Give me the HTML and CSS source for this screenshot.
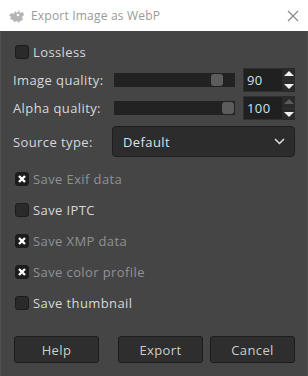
FILE: index.html
```html
<!DOCTYPE html>
<html lang="en">
<head>
  <meta charset="UTF-8">
  <title>Export Image as WebP</title>
  <link rel="stylesheet" href="styles.css">
</head>
<body>
  <div class="window">
    <div class="titlebar">
      <svg class="app-icon" width="17" height="14" viewBox="0 0 17 14">
        <path d="M1 6 L4 4 L6 5 L7 2 L9 4 L11 1 L12 4 L15 3 L16 6 L14 8 L15 11 L12 12 L11 14 L9 12 L6 13 L5 11 L2 10 L3 8 Z" fill="#b4b4b4"/>
        <circle cx="10" cy="6" r="1.3" fill="#ffffff"/>
      </svg>
      <span class="title">Export Image as WebP</span>
      <svg class="close" width="12" height="12" viewBox="0 0 12 12">
        <path d="M1 1 L11 11 M11 1 L1 11" stroke="#8a8a8a" stroke-width="1.2"/>
      </svg>
    </div>

    <div class="content">
      <label class="check-row first">
        <span class="check"></span> Lossless
      </label>

      <div class="scale-row first">
        <span class="field-label">Image quality:</span>
        <div class="track"><span class="handle" style="left: 97px"></span></div>
        <div class="spin">
          <span class="spin-value">90</span>
          <div class="spin-buttons">
            <span class="arrow up"></span>
            <span class="arrow down"></span>
          </div>
        </div>
      </div>

      <div class="scale-row">
        <span class="field-label">Alpha quality:</span>
        <div class="track"><span class="handle" style="left: 108px"></span></div>
        <div class="spin">
          <span class="spin-value">100</span>
          <div class="spin-buttons">
            <span class="arrow up disabled"></span>
            <span class="arrow down"></span>
          </div>
        </div>
      </div>

      <div class="combo-row">
        <span class="field-label">Source type:</span>
        <div class="combo">
          <span>Default</span>
          <svg width="11" height="7" viewBox="0 0 11 7">
            <path d="M1 1 L5.5 5.5 L10 1" fill="none" stroke="#e0e0e0" stroke-width="1.5"/>
          </svg>
        </div>
      </div>

      <div class="checks">
        <label class="check-row dim">
          <span class="check on"><svg width="10" height="10" viewBox="0 0 10 10"><path d="M2 2 L8 8 M8 2 L2 8" stroke="#ffffff" stroke-width="2.4"/></svg></span> Save Exif data
        </label>
        <label class="check-row"><span class="check"></span> Save IPTC</label>
        <label class="check-row dim">
          <span class="check on"><svg width="10" height="10" viewBox="0 0 10 10"><path d="M2 2 L8 8 M8 2 L2 8" stroke="#ffffff" stroke-width="2.4"/></svg></span> Save XMP data
        </label>
        <label class="check-row dim">
          <span class="check on"><svg width="10" height="10" viewBox="0 0 10 10"><path d="M2 2 L8 8 M8 2 L2 8" stroke="#ffffff" stroke-width="2.4"/></svg></span> Save color profile
        </label>
        <label class="check-row"><span class="check"></span> Save thumbnail</label>
      </div>

      <div class="buttons">
        <button class="btn">Help</button>
        <div class="right-buttons">
          <button class="btn">Export</button>
          <button class="btn">Cancel</button>
        </div>
      </div>
    </div>
  </div>
</body>
</html>
```

FILE: styles.css
```css
body {
  margin: 0;
  padding: 0;
  font-family: "Open Sans", "Noto Sans", sans-serif;
  background: #454545;
}

.window {
  width: 308px;
  height: 376px;
  background: #454545;
  box-sizing: border-box;
  border-left: 1px solid #505050;
  border-right: 1px solid #505050;
}

.titlebar {
  height: 31px;
  background: #ffffff;
  display: flex;
  align-items: center;
  padding-left: 8px;
  margin: 0 -1px;
}

.app-icon {
  margin-right: 6px;
}

.title {
  font-size: 12px;
  color: #999999;
  flex: 1;
  letter-spacing: 0.2px;
}

.close {
  margin-right: 9px;
}

.content {
  padding: 0 12px;
  color: #d4d8dc;
  font-size: 13px;
  letter-spacing: 0.4px;
}

.check-row {
  display: flex;
  align-items: center;
  gap: 4px;
  height: 31px;
  padding-left: 2px;
}

.check-row.first {
  height: 14px;
  margin-top: 14px;
}

.check-row.dim {
  color: #8e9296;
}

.check {
  width: 12px;
  height: 12px;
  border: 1px solid #1c1c1c;
  border-radius: 3px;
  background: #2a2a2a;
  display: inline-flex;
  align-items: center;
  justify-content: center;
  flex: none;
}

.check.on {
  background: #1c1c1c;
}

.scale-row,
.combo-row {
  display: flex;
  align-items: center;
}

.scale-row {
  height: 24px;
  margin-top: 4px;
}

.scale-row.first {
  margin-top: 9px;
}

.field-label {
  width: 101px;
  flex: none;
}

.track {
  position: relative;
  width: 121px;
  height: 14px;
  background: #222222;
  margin-right: 8px;
}

.handle {
  position: absolute;
  top: 1px;
  width: 12px;
  height: 12px;
  border-radius: 3px;
  background: #5c5c5c;
}

.spin {
  display: flex;
  height: 24px;
}

.spin-value {
  width: 35px;
  background: #202020;
  border: 1px solid #303030;
  border-right: none;
  padding-left: 3px;
  color: #cfe0f0;
  font-size: 13px;
  line-height: 22px;
}

.spin-buttons {
  width: 13px;
  display: flex;
  flex-direction: column;
  gap: 1px;
  background: #303030;
}

.arrow {
  flex: 1;
  background: #2a2a2a;
  display: flex;
  align-items: center;
  justify-content: center;
}

.arrow::after {
  content: "";
  border-left: 5px solid transparent;
  border-right: 5px solid transparent;
}

.arrow.up::after {
  border-bottom: 5px solid #f0f0f0;
}

.arrow.down::after {
  border-top: 5px solid #f0f0f0;
}

.arrow.up.disabled::after {
  border-bottom-color: #5a5a5a;
}

.combo-row {
  margin-top: 6px;
  height: 31px;
}

.combo {
  flex: 1;
  height: 31px;
  box-sizing: border-box;
  margin-left: -2px;
  background: #2c2c2c;
  border: 1px solid #1e1e1e;
  border-radius: 4px;
  display: flex;
  align-items: center;
  justify-content: space-between;
  padding: 0 9px 0 10px;
  color: #d8e0ea;
}

.checks {
  margin-top: 6px;
}

.buttons {
  display: flex;
  justify-content: space-between;
  margin-top: 18px;
  padding-left: 1px;
}

.right-buttons {
  display: flex;
  gap: 7px;
}

.btn {
  width: 85px;
  height: 27px;
  background: #2e2e2e;
  border: 1px solid #1c1c1c;
  border-radius: 3px;
  color: #cccccc;
  font-family: "Open Sans", "Noto Sans", sans-serif;
  font-size: 13px;
  letter-spacing: 0.4px;
  padding: 0;
}
```
